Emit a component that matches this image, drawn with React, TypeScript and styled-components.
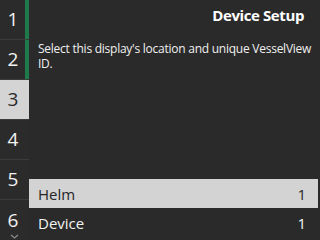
import React from "react";
import styled, { createGlobalStyle } from "styled-components";

const GlobalStyle = createGlobalStyle`
  html, body { margin: 0; padding: 0; background: #2a2a2a; }
  body { font-family: "Open Sans", "Noto Sans", sans-serif; }
`;

const Screen = styled.div`
  width: 320px;
  height: 240px;
  display: flex;
  background: #2a2a2a;
  color: #f2f2f2;
  overflow: hidden;
`;

const Sidebar = styled.nav`
  position: relative;
  width: 29px;
  flex: none;
  display: flex;
  flex-direction: column;
  background: #2b2b2b;
`;

const ScrollIndicator = styled.div`
  position: absolute;
  top: 0;
  right: 0;
  width: 4px;
  height: 79px;
  background: #1e7a4c;
`;

const Tab = styled.div<{ $active?: boolean; $last?: boolean }>`
  position: relative;
  z-index: ${(p) => (p.$active ? 1 : 0)};
  height: ${(p) => (p.$last ? "41px" : "39px")};
  flex: none;
  display: flex;
  align-items: center;
  justify-content: center;
  padding-right: 3px;
  border-bottom: ${(p) => (p.$last ? "none" : "1px solid #3c3c3c")};
  background: ${(p) => (p.$active ? "#d4d4d4" : "transparent")};
  color: ${(p) => (p.$active ? "#2a2a2a" : "#f2f2f2")};
  font-size: 19px;
  line-height: 1;
`;

const Chevron = styled.svg`
  position: absolute;
  left: 10px;
  bottom: 2px;
`;

const Main = styled.main`
  flex: 1;
  display: flex;
  flex-direction: column;
  min-width: 0;
`;

const Title = styled.h1`
  margin: 0;
  padding: 4px 16px 0 0;
  height: 26px;
  text-align: right;
  font-size: 15px;
  font-weight: 700;
  letter-spacing: -0.4px;
  line-height: 22px;
  color: #ffffff;
`;

const Description = styled.p`
  margin: 11px 0 0;
  padding: 0 0 0 9px;
  font-size: 12px;
  letter-spacing: -0.25px;
  line-height: 15px;
  color: #f0f0f0;
`;

const List = styled.div`
  margin-top: auto;
  margin-bottom: 3px;
  margin-right: 2px;
  display: flex;
  flex-direction: column;
`;

const ListRow = styled.div<{ $selected?: boolean }>`
  height: 29px;
  display: flex;
  align-items: center;
  justify-content: space-between;
  padding: 0 12px 0 9px;
  background: ${(p) => (p.$selected ? "#d3d3d3" : "transparent")};
  color: ${(p) => (p.$selected ? "#262626" : "#f2f2f2")};
  font-size: 15px;
`;

const tabs = [1, 2, 3, 4, 5, 6];
const rows = [
  { label: "Helm", value: "1", selected: true },
  { label: "Device", value: "1", selected: false },
];

export default function App() {
  return (
    <>
      <GlobalStyle />
      <Screen>
        <Sidebar>
          <ScrollIndicator />
          {tabs.map((n) => (
            <Tab key={n} $active={n === 3} $last={n === 6}>
              {n}
              {n === 6 && (
                <Chevron width="9" height="5" viewBox="0 0 9 5">
                  <path d="M1 1 L4.5 4 L8 1" fill="none" stroke="#8a8a8a" strokeWidth="1.3" />
                </Chevron>
              )}
            </Tab>
          ))}
        </Sidebar>
        <Main>
          <Title>Device Setup</Title>
          <Description>Select this display's location and unique VesselView ID.</Description>
          <List>
            {rows.map((r) => (
              <ListRow key={r.label} $selected={r.selected}>
                <span>{r.label}</span>
                <span>{r.value}</span>
              </ListRow>
            ))}
          </List>
        </Main>
      </Screen>
    </>
  );
}
